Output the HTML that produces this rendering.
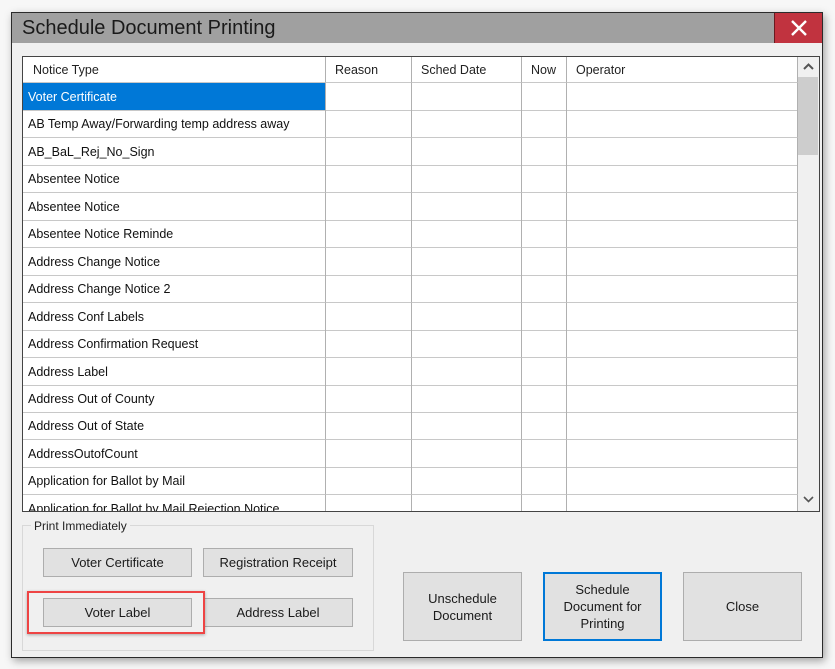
<!DOCTYPE html>
<html><head><style>
*{box-sizing:border-box;margin:0;padding:0}
body{width:835px;height:669px;background:#f7f7f7;position:relative;overflow:hidden;font-family:"Liberation Sans",sans-serif;font-size:12.5px;color:#000}
.win{position:absolute;left:11px;top:12px;width:812px;height:646px;background:#f0f0f0;border:1px solid #2b2b2b;box-shadow:2px 3px 8px rgba(0,0,0,.35)}
.title{position:absolute;left:0;top:0;width:810px;height:30px;background:#a0a0a0}
.title span{position:absolute;left:10px;top:4px;font-size:20px;color:#1a1a1a}
.x{position:absolute;right:0;top:0;width:48px;height:30px;background:#c1333f;border-left:1px solid #6a1a20}
.abs{position:absolute}
.grid{position:absolute;left:10px;top:43px;width:798px;height:456px;border:1px solid #444;background:#fff;overflow:hidden}
.cell{position:absolute;height:28px;line-height:29px;padding-left:5px;white-space:nowrap;border-bottom:1px solid #c8c8c8;border-right:1px solid #b0b0b0}
.btn{position:absolute;background:#e1e1e1;border:1px solid #adadad;text-align:center;font-size:13px;color:#1a1a1a;display:flex;align-items:center;justify-content:center;line-height:17px}
</style></head><body>
<div class="win">
 <div class="title"><span>Schedule Document Printing</span>
  <div class="x"><svg width="48" height="30"><path d="M17 8 L31 22 M31 8 L17 22" stroke="#fff" stroke-width="2.4"/></svg></div></div>
 <div class="grid" id="g"></div>
 <div class="abs" style="left:10px;top:512px;width:352px;height:126px;border:1px solid #d8d8d8"></div>
 <div class="abs" style="left:19px;top:506px;background:#f0f0f0;padding:0 3px;font-size:12px;color:#222">Print Immediately</div>
 <div class="btn" style="left:31px;top:535px;width:149px;height:29px">Voter Certificate</div>
 <div class="btn" style="left:191px;top:535px;width:150px;height:29px">Registration Receipt</div>
 <div class="btn" style="left:31px;top:585px;width:149px;height:29px">Voter Label</div>
 <div class="btn" style="left:191px;top:585px;width:150px;height:29px">Address Label</div>
 <div class="abs" style="left:15px;top:578px;width:178px;height:43px;border:2px solid #ee4444;box-shadow:0 1px 3px rgba(0,0,0,.3)"></div>
 <div class="btn" style="left:391px;top:559px;width:119px;height:69px">Unschedule<br>Document</div>
 <div class="btn" style="left:531px;top:559px;width:119px;height:69px;border:2px solid #0078d7">Schedule<br>Document for<br>Printing</div>
 <div class="btn" style="left:671px;top:559px;width:119px;height:69px">Close</div>
</div>
<script>
var g=document.getElementById('g');
var cols=[0,303,389,499,544,775];
var h='';
var hd=['Notice Type','Reason','Sched Date','Now','Operator'];
for(var c=0;c<5;c++){h+='<div class="cell" style="left:'+cols[c]+'px;top:0;width:'+(cols[c+1]-cols[c])+'px;height:26px;line-height:27px;padding-left:'+(c==0?10:9)+'px;color:#222">'+hd[c]+'</div>';}
var rows=['Voter Certificate','AB Temp Away/Forwarding temp address away','AB_BaL_Rej_No_Sign','Absentee Notice','Absentee Notice','Absentee Notice Reminde','Address Change Notice','Address Change Notice 2','Address Conf Labels','Address Confirmation Request','Address Label','Address Out of County','Address Out of State','AddressOutofCount','Application for Ballot by Mail','Application for Ballot by Mail Rejection Notice'];
for(var r=0;r<rows.length;r++){var t=26+r*27.45;
 for(var c=0;c<5;c++){var sel=(r==0&&c==0);
  h+='<div class="cell" style="left:'+cols[c]+'px;top:'+t+'px;width:'+(cols[c+1]-cols[c])+'px;'+(sel?'background:#0078d7;color:#fff;':'color:#111;')+'">'+(c==0?rows[r]:'')+'</div>';}}
h+='<div class="abs" style="left:775px;top:0;width:21px;height:456px;background:#f0f0f0"></div>';
h+='<div class="abs" style="left:775px;top:20px;width:20px;height:78px;background:#cdcdcd"></div>';
h+='<svg class="abs" style="left:775px;top:0" width="21" height="456"><path d="M6 12 L10.5 7.5 L15 12" fill="none" stroke="#555" stroke-width="2"/><path d="M6 440 L10.5 444.5 L15 440" fill="none" stroke="#555" stroke-width="1.6"/></svg>';
g.innerHTML=h;
</script>
</body></html>
